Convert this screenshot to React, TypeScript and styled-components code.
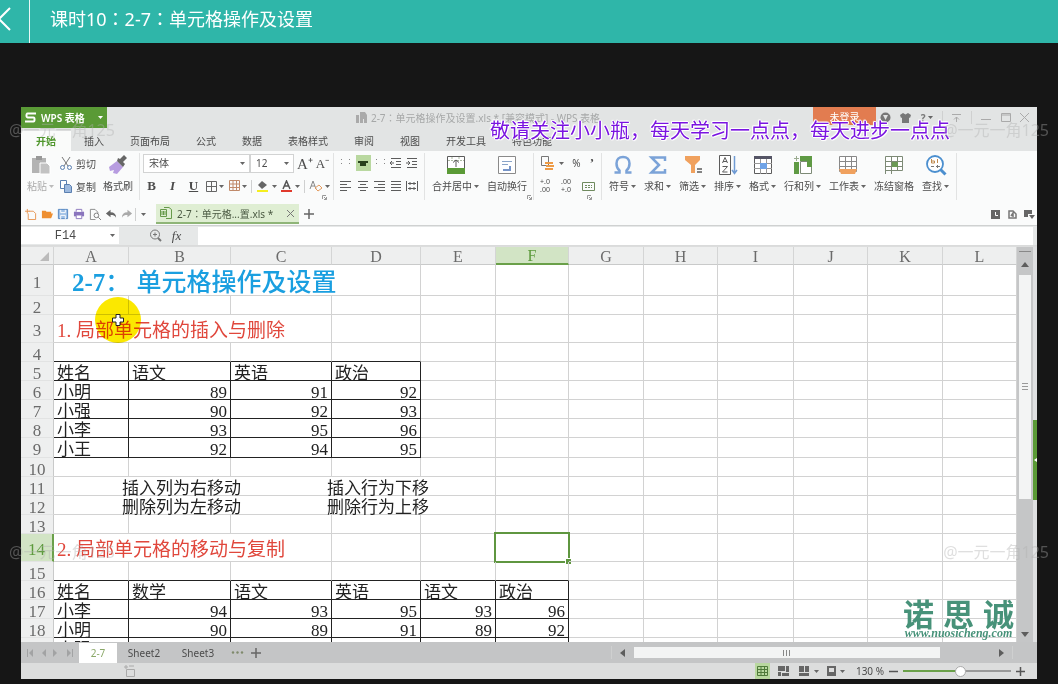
import React from 'react';
import styled, { createGlobalStyle } from 'styled-components';

const SANS = "'Noto Sans', 'Noto Sans CJK SC', sans-serif";
const SONG = "'Liberation Serif', 'Noto Sans CJK SC', serif";

const GlobalStyle = createGlobalStyle`
  * { box-sizing: border-box; }
  body { margin: 0; background: #161616; font-family: ${SANS}; }
  button, input, select { font-family: inherit; color: inherit; margin: 0; padding: 0; border: 0; background: none; border-radius: 0; }
  button { cursor: pointer; }
  svg { display: block; flex: none; }
`;

const Page = styled.div`
  position: relative;
  display: flex;
  flex-direction: column;
  height: 100vh;
  min-height: 480px;
  overflow: hidden;
`;
const CourseBar = styled.header`
  display: flex;
  align-items: stretch;
  flex: none;
  height: 43px;
  background: #2fb6a9;
  color: #fff;
`;
const Back = styled.button`
  width: 30px;
  padding-bottom: 6px;
  border-right: 1px solid #e8f8f6;
`;
const CourseTitle = styled.h1`
  margin: 0;
  padding-left: 20px;
  font-size: 18px;
  font-weight: 400;
  line-height: 36px;
`;
const Colon = styled.span`
  font-family: 'Noto Sans CJK TC', sans-serif;
`;
const Stage = styled.main`
  display: flex;
  flex: 1;
  min-height: 0;
  padding: 64px 21px 5px;
`;
const AppWindow = styled.section`
  position: relative;
  display: flex;
  flex-direction: column;
  flex: 1;
  min-width: 0;
  overflow: hidden;
  background: #fff;
  color: #4c4c4c;
  font-size: 10px;
`;

const TitleBar = styled.div`
  display: flex;
  flex: none;
  height: 24px;
  align-items: flex-start;
  background: #e2e4e4;
`;
const Brand = styled.button`
  display: flex;
  align-items: center;
  gap: 5px;
  width: 86px;
  height: 21px;
  padding: 0 4px;
  background: #5a9a36;
  color: #fff;
  font-size: 10px;
  font-weight: 600;
  white-space: nowrap;
`;
const FileName = styled.div`
  display: flex;
  flex: 1;
  align-items: center;
  justify-content: center;
  gap: 4px;
  height: 21px;
  padding-left: 36px;
  color: #a6a8a8;
  white-space: nowrap;
`;
const SignIn = styled.button`
  width: 63px;
  height: 18px;
  background: #e27c50;
  color: #fff;
  font-size: 10px;
`;
const WindowTools = styled.div`
  display: flex;
  align-items: center;
  justify-content: space-between;
  width: 161px;
  height: 21px;
  padding: 0 8px 0 4px;
  color: #777;
`;
const IconButton = styled.button<{ $on?: boolean }>`
  display: flex;
  align-items: center;
  justify-content: center;
  gap: 2px;
  height: 16px;
  min-width: 15px;
  background: ${(p) => (p.$on ? '#b9d8a0' : 'transparent')};
  font-size: 10px;
`;
const Tabs = styled.nav`
  display: flex;
  flex: none;
  height: 20px;
  padding-right: 10px;
  background: #e2e4e4;
`;
const Tab = styled.button<{ $active?: boolean }>`
  padding: 0 ${(p) => (p.$active ? 15 : 13)}px;
  background: ${(p) => (p.$active ? '#fafbfa' : 'transparent')};
  color: ${(p) => (p.$active ? '#4f962c' : '#4c4c4c')};
  font-weight: ${(p) => (p.$active ? 700 : 400)};
  font-size: 10px;
  line-height: 20px;
  white-space: nowrap;
`;

const Ribbon = styled.div`
  display: flex;
  flex: none;
  height: 53px;
  padding-top: 2px;
  background: #fafbfb;
`;
const Group = styled.div<{ $w?: number; $gap?: number; $pad?: number }>`
  display: flex;
  flex: none;
  gap: ${(p) => p.$gap ?? 0}px;
  width: ${(p) => (p.$w ? `${p.$w}px` : 'auto')};
  height: 47px;
  padding: 0 ${(p) => p.$pad ?? 6}px;
  border-right: 1px solid #e2e3e3;
`;
const Stack = styled.div`
  display: flex;
  flex-direction: column;
  flex: 1;
  gap: 3px;
`;
const Line = styled.div<{ $gap?: number; $between?: boolean }>`
  display: flex;
  align-items: center;
  justify-content: ${(p) => (p.$between ? 'space-between' : 'flex-start')};
  gap: ${(p) => p.$gap ?? 0}px;
  height: 20px;
`;
const BigButton = styled.button<{ $muted?: boolean }>`
  display: flex;
  flex-direction: column;
  align-items: center;
  gap: 2px;
  height: 44px;
  padding-top: 1px;
  color: ${(p) => (p.$muted ? '#aaa' : '#4c4c4c')};
  font-size: 10px;
  line-height: 16px;
  white-space: nowrap;
`;
const Label = styled.span`
  display: flex;
  align-items: center;
  gap: 2px;
`;
const SmallButton = styled.button`
  display: flex;
  align-items: center;
  gap: 4px;
  height: 20px;
  font-size: 10px;
  white-space: nowrap;
`;
const SelectBox = styled.label<{ $w: number }>`
  display: flex;
  align-items: center;
  width: ${(p) => p.$w}px;
  height: 19px;
  padding-right: 4px;
  border: 1px solid #d2d3d3;
  background: #fff;
`;
const Select = styled.select`
  flex: 1;
  min-width: 0;
  height: 17px;
  padding-left: 5px;
  appearance: none;
  font-size: 10px;
  outline: 0;
`;
const Format = styled.button<{ $bold?: boolean; $italic?: boolean; $line?: boolean; $w?: number; $size?: number }>`
  width: ${(p) => p.$w ?? 17}px;
  font-family: 'Liberation Serif', serif;
  font-size: ${(p) => p.$size ?? 13}px;
  font-weight: ${(p) => (p.$bold ? 700 : 400)};
  font-style: ${(p) => (p.$italic ? 'italic' : 'normal')};
  text-decoration: ${(p) => (p.$line ? 'underline' : 'none')};
`;
const Tiny = styled.button`
  font-size: 7px;
  line-height: 8px;
  text-align: right;
`;

const QuickBar = styled.div`
  display: flex;
  flex: none;
  align-items: center;
  height: 22px;
  padding: 0 0 1px 2px;
  border-bottom: 1px solid #cfd1d1;
  background: #fafbfb;
`;
const QuickTools = styled.div`
  display: flex;
  align-items: center;
  width: 129px;
`;
const Divider = styled.i`
  width: 1px;
  height: 13px;
  background: #cfd0d0;
`;
const DocTab = styled.div`
  display: flex;
  align-items: center;
  gap: 5px;
  width: 143px;
  height: 20px;
  margin-left: 4px;
  padding: 0 5px 0 4px;
  border-bottom: 2px solid #8fb578;
  background: #dfeed3;
  color: #4b5a43;
  white-space: nowrap;
`;
const Spacer = styled.span`
  flex: 1;
`;
const FormulaBar = styled.div`
  display: flex;
  flex: none;
  align-items: center;
  height: 20px;
  padding: 1px 4px 1px 0;
  border-bottom: 1px solid #dadbdb;
  background: #e6e8e8;
`;
const NameBox = styled.div`
  display: flex;
  align-items: center;
  width: 98px;
  height: 17px;
  padding-right: 4px;
  background: #fff;
`;
const NameInput = styled.input`
  flex: 1;
  min-width: 0;
  height: 17px;
  text-align: center;
  font-family: 'Liberation Mono', monospace;
  font-size: 12px;
`;
const FormulaTools = styled.div`
  display: flex;
  align-items: center;
  gap: 6px;
  width: 79px;
  padding-left: 30px;
`;
const FormulaInput = styled.input`
  flex: 1;
  min-width: 0;
  height: 18px;
  background: #fff;
  font-size: 12px;
`;

const Workspace = styled.div`
  display: flex;
  flex: 1;
  min-height: 0;
  padding-top: 1px;
  background: #dcdddd;
`;
const SheetArea = styled.div`
  position: relative;
  flex: 1;
  min-width: 0;
  overflow: hidden;
  background: #fff;
`;
const Sheet = styled.table`
  width: 100%;
  table-layout: fixed;
  border-collapse: separate;
  border-spacing: 0;
  font-family: ${SONG};
  font-size: 17px;
  color: #222;
`;
const ColHead = styled.th<{ $on?: boolean }>`
  height: 18px;
  padding: 2px 0 0;
  border-right: 1px solid #d4d5d5;
  border-bottom: ${(p) => (p.$on ? '2px solid #6aa049' : '1px solid #c9caca')};
  background: ${(p) => (p.$on ? '#d2e4c5' : '#eeefef')};
  color: ${(p) => (p.$on ? '#5c9a3c' : '#6b6b6b')};
  font-size: 16px;
  font-weight: 400;
  line-height: 14px;
`;
const RowHead = styled.th<{ $on?: boolean }>`
  padding: 0;
  border-right: ${(p) => (p.$on ? '2px solid #6aa049' : '1px solid #c9caca')};
  border-bottom: 1px solid #e2e3e3;
  background: ${(p) => (p.$on ? '#d2e4c5' : '#eeefef')};
  color: ${(p) => (p.$on ? '#5c9a3c' : '#6b6b6b')};
  font-weight: 400;
  text-align: center;
`;
const Cell = styled.td<{ $rule?: boolean; $below?: boolean; $num?: boolean }>`
  position: relative;
  padding: 0 3px;
  border-right: 1px solid ${(p) => (p.$rule ? '#222' : '#d2d2d2')};
  border-bottom: 1px solid ${(p) => (p.$rule || p.$below ? '#222' : '#d2d2d2')};
  text-align: ${(p) => (p.$num ? 'right' : 'left')};
`;
const Content = styled.div<{ $h: number }>`
  height: ${(p) => p.$h - 1}px;
  line-height: ${(p) => p.$h + 4}px;
  white-space: pre;
`;
const SheetTitle = styled.strong`
  padding-left: 15px;
  color: #1a9fe0;
  font-size: 25px;
  font-weight: 500;
`;
const TitleNumber = styled.span`
  font-weight: 700;
`;
const Section = styled.span`
  color: #e0473c;
  font-size: 19px;
`;
const Notes = styled.span`
  display: flex;
  gap: 86px;
  padding-left: 65px;
`;
const Selection = styled.div`
  position: absolute;
  inset: -2px;
  border: 2px solid #5f9640;
  &::after {
    content: '';
    position: absolute;
    right: -3px;
    bottom: -3px;
    width: 5px;
    height: 5px;
    border: 1px solid #fff;
    border-width: 1px 0 0 1px;
    background: #5f9640;
  }
`;
const Logo = styled.div`
  position: absolute;
  right: 3px;
  bottom: 3px;
  display: flex;
  flex-direction: column;
  align-items: center;
  color: #479279;
`;
const LogoName = styled.div`
  display: flex;
  gap: 9px;
  font-size: 31px;
  font-weight: 700;
  line-height: 26px;
`;
const LogoUrl = styled.a`
  color: inherit;
  font: italic 700 12px/12px 'Liberation Serif', serif;
  text-decoration: none;
`;
const VScroll = styled.div`
  display: flex;
  flex-direction: column;
  align-items: center;
  width: 16px;
  padding: 4px 0;
  background: #c5c6c7;
  color: #5d5d5d;
`;
const SplitMark = styled.i`
  width: 12px;
  height: 1px;
  margin-bottom: 9px;
  background: #888;
`;
const VThumb = styled.div`
  display: flex;
  flex: 225;
  align-items: center;
  justify-content: center;
  width: 12px;
  margin-top: 6px;
  background: #f3f4f4;
`;
const VRest = styled.div`
  flex: 132;
`;
const Edge = styled.div`
  display: flex;
  flex-direction: column;
  width: 4px;
  background: #dfe0e1;
`;
const PaneHandle = styled.button`
  display: flex;
  align-items: center;
  justify-content: flex-end;
  width: 4px;
  height: 80px;
  margin-top: 173px;
  background: #5a9a36;
  color: #fff;
`;

const SheetBar = styled.div`
  display: flex;
  flex: none;
  align-items: center;
  height: 21px;
  padding: 0 24px 0 6px;
  background: #c4c5c6;
  font-size: 11px;
`;
const SheetNav = styled.div`
  display: flex;
  align-items: center;
  justify-content: space-between;
  width: 52px;
  padding-right: 6px;
  color: #a2a3a4;
`;
const SheetTab = styled.button<{ $active?: boolean }>`
  width: ${(p) => (p.$active ? 38 : 54)}px;
  height: 20px;
  background: ${(p) => (p.$active ? '#fff' : 'transparent')};
  color: ${(p) => (p.$active ? '#8aa868' : '#4c4c4c')};
  font-size: 10px;
`;
const HScroll = styled.div`
  display: flex;
  flex: 0 0 402px;
  align-items: center;
  gap: 7px;
  color: #5d5d5d;
`;
const HThumb = styled.div`
  display: flex;
  flex: none;
  align-items: center;
  justify-content: center;
  width: 306px;
  height: 11px;
  background: #f3f4f4;
`;
const Status = styled.footer`
  display: flex;
  flex: none;
  align-items: center;
  height: 16px;
  padding: 0 12px 0 103px;
  background: #dcdddd;
`;
const ViewButtons = styled.div`
  display: flex;
  gap: 6px;
  margin-right: 11px;
`;
const Zoom = styled.label`
  display: flex;
  align-items: center;
  gap: 5px;
  font-size: 10px;
  white-space: nowrap;
`;
const Range = styled.input`
  width: 108px;
  height: 14px;
  appearance: none;
  background: linear-gradient(to right, #6aa049 54%, #999 54%) center / 100% 2px no-repeat;
  &::-webkit-slider-thumb {
    appearance: none;
    width: 11px;
    height: 11px;
    border: 1px solid #aaa;
    border-radius: 50%;
    background: #fff;
  }
`;

const Banner = styled.p`
  position: absolute;
  top: 13px;
  right: 87px;
  margin: 0;
  color: #7a14e0;
  font-size: 20px;
  line-height: 22px;
  text-shadow: -1px 0 #fff, 1px 0 #fff, 0 -1px #fff, 0 1px #fff, 1px 1px 1px #fff, -1px -1px 1px #fff;
  white-space: nowrap;
`;
const Watermark = styled.span<{ $top: number; $end?: boolean }>`
  position: absolute;
  top: ${(p) => p.$top}px;
  ${(p) => (p.$end ? 'right: 9px;' : 'left: 9px;')}
  color: rgba(175, 175, 175, 0.4);
  font-size: 16px;
  line-height: 20px;
  pointer-events: none;
`;
const Pointer = styled.div`
  position: absolute;
  top: 190px;
  left: 74px;
  display: flex;
  align-items: center;
  justify-content: center;
  width: 46px;
  height: 46px;
`;
const Halo = styled.i`
  position: absolute;
  inset: 0;
  border-radius: 50%;
  background: #fbe800;
  mix-blend-mode: multiply;
`;
const PointerIcon = styled.svg`
  position: relative;
`;

const Caret = ({ color = '#666' }: { color?: string }) => (
  <svg width="5" height="3" viewBox="0 0 5 3"><path d="M0 0h5L2.5 3z" fill={color} /></svg>
);
const Triangle = ({ d }: { d: string }) => (
  <svg width="8" height="8" viewBox="0 0 8 8"><path d={d} fill="currentColor" /></svg>
);
const Plus = () => (
  <svg width="10" height="10" viewBox="0 0 10 10"><path d="M5 0v10M0 5h10" stroke="#666" strokeWidth="1.5" /></svg>
);
const Art = ({ w = 22, children }: { w?: number; children: React.ReactNode }) => (
  <svg width={w} height={w} viewBox="0 0 22 22" fill="none" stroke="#5c5c5c">{children}</svg>
);
const Launcher = () => (
  <svg width="5" height="5" viewBox="0 0 5 5" fill="none" stroke="#999"><path d="M.5 4V.5H4M2 2l2.500 2.500M4.500 2v2.500H2" /></svg>
);
const Corner = styled.span`
  align-self: flex-end;
  margin: 0 3px 0 -8px;
`;

const art = {
  paste: <Art><path d="M2 4h14v15H2z" fill="#b3b3b3" stroke="none" /><path d="M6 2h6v4H6z" fill="#999" stroke="none" /><path d="M10 9h7l3 3v8H10z" fill="#c2c2c2" stroke="#fff" /></Art>,
  brush: <Art><path d="M2 13l8-6 6 6-6 7-4-1 1-3-4 1z" fill="#b79ce0" stroke="none" /><path d="M10 7l6 6 2-3-2-2 4-4-3-3-4 4-2-1z" fill="#666" stroke="none" /></Art>,
  merge: <Art><path d="M2.500 2.500h17v17h-17z" fill="#fff" /><path d="M2 14h18v6H2z" fill="#5a9a36" stroke="none" /><path d="M3 6.500h16M7 3v3M14 3v3" stroke="#a9b8a0" strokeDasharray="2 1" /><path d="M11 6v7M8 8.500L11 6l3 2.500" /></Art>,
  wrap: <Art><path d="M2.500 2.500h17v17h-17z" fill="#fff" stroke="#8a8a8a" /><path d="M6 7.500h10M6 10.500h6" stroke="#8aa4c8" /><path d="M7 16h7v-4" stroke="#7795c8" strokeWidth="2" /></Art>,
  omega: <Art><path d="M2.500 18.500h5v-2C5 14.500 4.500 12 4.500 9.500 4.500 5.500 7 3 11 3s6.500 2.500 6.500 6.500c0 2.500-.5 5-3 7v2h5" stroke="#7ba3d8" strokeWidth="2.500" /></Art>,
  sigma: <Art><path d="M18 7V3.500H4.500L12 11l-7.500 7.500H18V15" stroke="#7ba3d8" strokeWidth="2.500" /></Art>,
  filter: <Art><path d="M3 2h15v4l-5 5v8H9v-8L3 6z" fill="#f0a15e" stroke="none" /><path d="M15 15h5M15 18h5" strokeWidth="1.500" /></Art>,
  sort: <Art><path d="M2.500 1.500h11v19h-11z" fill="#fff" /><path d="M5.500 9L8 3.500 10.500 9M6 7.500h4M5.500 12.500h5L5.500 18h5" /><path d="M17.500 2v17M15 16l2.500 3.500L20 16" stroke="#6f9bd4" strokeWidth="1.500" /></Art>,
  format: <Art><path d="M2.500 2.500h17v17h-17z" fill="#fff" /><path d="M2 2h18v3H2z" fill="#556" stroke="none" /><path d="M8.500 5v15M14.500 5v15M2 9.500h18M2 14.500h18" stroke="#999" /><path d="M8 9h7v6H8z" fill="#6fa3e6" stroke="none" /></Art>,
  rows: <Art><path d="M2 8h5v12H2zM8 2h12v5H8z" fill="#5f9a44" stroke="none" /><path d="M8.500 7.500h11v12h-11z" fill="#fff" stroke="#7d8a76" /><path d="M2 4.500h5M4.500 2v5" stroke="#9aab90" /><path d="M15 7h5v6h-5z" fill="#5f9a44" stroke="none" /></Art>,
  sheet: <Art><path d="M2.500 2.500h17v15h-17zM8.500 3v14M14.500 3v14M3 7.500h16M3 12.500h16" fill="#fff" stroke="#888" /><path d="M2 15h18l-2 5H4z" fill="#f0a15e" stroke="none" /></Art>,
  freeze: <Art><path d="M2.500 2.500h17v14h-17zM8.500 3v17M14.500 3v13M3 7.500h16M3 12.500h16M2.500 16v4" fill="#fff" stroke="#7d8a76" /><path d="M9 8h6v5H9z" fill="#6c9a55" stroke="none" /></Art>,
  find: <Art><circle cx="10" cy="10" r="8" fill="#fff" stroke="#4b8fcf" strokeWidth="1.800" /><path d="M15.500 15.500l5 5" stroke="#4b8fcf" strokeWidth="3" /><path d="M6.500 5v4h3V7h-3M12.500 5v4" stroke="#c08a4e" /><path d="M6 12.500h3M11 12.500h4M12.500 11v3" stroke="#777" /></Art>,
};

const bigButtons: { label: string; icon: React.ReactNode; plain?: boolean }[] = [
  { label: '符号', icon: art.omega },
  { label: '求和', icon: art.sigma },
  { label: '筛选', icon: art.filter },
  { label: '排序', icon: art.sort },
  { label: '格式', icon: art.format },
  { label: '行和列', icon: art.rows },
  { label: '工作表', icon: art.sheet },
  { label: '冻结窗格', icon: art.freeze, plain: true },
  { label: '查找', icon: art.find },
];

const Align = ({ kind }: { kind: 'left' | 'center' | 'right' | 'full' | 'spread' | 'out' | 'in' }) => {
  const paths = {
    left: 'M0 1.500h11M0 4.500h7M0 7.500h11M0 10.500h7',
    center: 'M1 1.500h10M3 4.500h6M1 7.500h10M3 10.500h6',
    right: 'M1 1.500h11M5 4.500h7M1 7.500h11M5 10.500h7',
    full: 'M1 1.500h10M1 4.500h10M1 7.500h10M1 10.500h10',
    spread: 'M.5 1v10M11.500 1v10M2 3.500h8M2 8.500h8M4 2v3M8 2v3M4 7v3M8 7v3',
    out: 'M1 1.500h10M6 4.500h5M6 7.500h5M1 10.500h10M4 6H0M2 4L0 6l2 2',
    in: 'M1 1.500h10M6 4.500h5M6 7.500h5M1 10.500h10M0 6h4M2 4l2 2-2 2',
  };
  return <svg width="12" height="12" viewBox="0 0 12 12" fill="none" stroke="#5c5c5c"><path d={paths[kind]} /></svg>;
};
const Dots = () => (
  <svg width="12" height="12" viewBox="0 0 12 12" fill="#888"><path d="M1 2h1v1H1zM1 6h1v1H1zM9 2h1v1H9zM9 6h1v1H9z" /></svg>
);
const Middle = () => (
  <svg width="12" height="12" viewBox="0 0 12 12"><path d="M1 4h10v2H1zM3 6h6v3H3z" fill="#27401c" /></svg>
);

const quickIcons = [
  { name: '新建', icon: <path d="M4 3.500h5l2.500 2.500v6.500h-8V6M0 3.500h5M2.500 1v5" stroke="#e6934e" /> },
  { name: '打开', icon: <path d="M1 11V3h4l1 1h5v2h2l-2 5z" fill="#ee8f31" stroke="none" /> },
  { name: '保存', icon: <><path d="M1.500 1.500h10v10h-10z" fill="#9fc0e6" stroke="#5384c0" /><path d="M4 2v3h5V2M4 12V8h5v4" stroke="#fff" /></> },
  { name: '打印', icon: <><path d="M1 4h11v5H1z" fill="#8a75bd" stroke="none" /><path d="M3.500 4V1.500h6V4M3.500 8v3.500h6V8" stroke="#8a75bd" fill="#fff" /></> },
  { name: '预览', icon: <><path d="M7 12.500H1.500v-11h5l3 3V6" stroke="#888" /><circle cx="8" cy="8" r="2.500" stroke="#777" /><path d="M10 10l3 3" stroke="#777" /></> },
  { name: '撤销', icon: <path d="M1 6l5-4v2.500c4 0 6 2 6 6-1.500-2.500-3-3-6-3V10z" fill="#666" stroke="none" /> },
  { name: '恢复', icon: <path d="M12 6L7 2v2.500c-4 0-6 2-6 6 1.500-2.500 3-3 6-3V10z" fill="#aaa" stroke="none" /> },
];

const columns = [33, 75, 102, 101, 89, 75, 73, 75, 74, 76, 74, 75];
const letters = 'ABCDEFGHIJKL'.split('');

type Row = { h?: number; merged?: { span: number; node: React.ReactNode }; data?: (string | number)[]; below?: number };
const rows: Row[] = [
  { h: 31, merged: { span: 4, node: <SheetTitle><TitleNumber>2-7</TitleNumber>： 单元格操作及设置</SheetTitle> } },
  {},
  { h: 28, merged: { span: 3, node: <Section>1. 局部单元格的插入与删除</Section> } },
  { below: 4 },
  { data: ['姓名', '语文', '英语', '政治'] },
  { data: ['小明', 89, 91, 92] },
  { data: ['小强', 90, 92, 93] },
  { data: ['小李', 93, 95, 96] },
  { h: 20, data: ['小王', 92, 94, 95] },
  {},
  { merged: { span: 5, node: <Notes><span>插入列为右移动</span><span>插入行为下移</span></Notes> } },
  { merged: { span: 5, node: <Notes><span>删除列为左移动</span><span>删除行为上移</span></Notes> } },
  {},
  { h: 28, merged: { span: 3, node: <Section>2. 局部单元格的移动与复制</Section> } },
  { below: 6 },
  { data: ['姓名', '数学', '语文', '英语', '语文', '政治'] },
  { data: ['小李', 94, 93, 95, 93, 96] },
  { data: ['小明', 90, 89, 91, 89, 92] },
  { data: ['小强', '', '', '', '', ''] },
];

function SheetRow({ row, index }: { row: Row; index: number }) {
  const h = row.h ?? 19;
  const start = row.merged ? row.merged.span : 0;
  const current = index === 13;
  return (
    <tr>
      <RowHead scope="row" $on={current}><Content $h={h}>{index + 1}</Content></RowHead>
      {row.merged && <Cell colSpan={start}><Content $h={h}>{row.merged.node}</Content></Cell>}
      {letters.slice(start).map((letter, i) => {
        const col = start + i;
        const value = row.data?.[col];
        return (
          <Cell
            key={letter}
            $rule={value !== undefined}
            $below={row.below !== undefined && col < row.below}
            $num={typeof value === 'number'}
          >
            <Content $h={h}>{value}</Content>
            {current && letter === 'F' && <Selection />}
          </Cell>
        );
      })}
    </tr>
  );
}

export default function App() {
  return (
    <Page>
      <GlobalStyle />
      <CourseBar>
        <Back aria-label="返回">
          <svg width="12" height="24" viewBox="0 0 12 24" fill="none" stroke="#fff" strokeWidth="2"><path d="M10 1L-1 12l11 11" /></svg>
        </Back>
        <CourseTitle>课时10<Colon>：</Colon>2-7<Colon>：</Colon>单元格操作及设置</CourseTitle>
      </CourseBar>
      <Stage>
        <AppWindow>
          <TitleBar>
            <Brand>
              <svg width="11" height="11" viewBox="0 0 11 11" fill="none" stroke="#fff" strokeWidth="1.800"><path d="M11 1.500H2.500C1 1.500 1 5.500 2.500 5.500h6c1.500 0 1.500 4 0 4H0" /></svg>
              WPS 表格
              <Spacer />
              <Caret color="#fff" />
            </Brand>
            <FileName>
              <svg width="11" height="11" viewBox="0 0 11 11" fill="#aaa"><path d="M0 3h3v8H0zM4 0h5l2 3v8H8V7H7v4H4z" /></svg>
              <span>2-7<Colon>：</Colon>单元格操作及设置.xls * [兼容模式] - WPS 表格</span>
            </FileName>
            <SignIn>未登录</SignIn>
            <WindowTools>
              <svg width="11" height="11" viewBox="0 0 11 11"><circle cx="5.500" cy="5.500" r="5" fill="#777" /><path d="M3 3h5L5.500 8z" fill="#e2e4e4" /></svg>
              <svg width="11" height="11" viewBox="0 0 11 11" fill="#777"><path d="M3 1l2.500 1.500L8 1l3 2-1 3-1-.5V11H2V5.500L1 6 0 3z" /></svg>
              <Label><b>?</b><Caret /></Label>
              <Divider />
              <svg width="9" height="9" viewBox="0 0 9 9" stroke="#aaa" fill="none"><path d="M0 1.500h9M4.500 9V4M2 6.500L4.500 4 7 6.500" /></svg>
              <Divider />
              <svg width="10" height="10" viewBox="0 0 10 10" stroke="#aaa"><path d="M0 6.500h10" /></svg>
              <svg width="10" height="9" viewBox="0 0 10 9" stroke="#aaa" fill="none"><path d="M.5.500h9v8h-9zM0 2h10" /></svg>
              <svg width="9" height="9" viewBox="0 0 9 9" stroke="#aaa"><path d="M0 0l9 9M9 0L0 9" /></svg>
            </WindowTools>
          </TitleBar>
          <Tabs>
            {['开始', '插入', '页面布局', '公式', '数据', '表格样式', '审阅', '视图', '开发工具', '特色功能'].map((t, i) => (
              <Tab key={t} $active={i === 0}>{t}</Tab>
            ))}
          </Tabs>

          <Ribbon>
            <Group $w={119} $gap={6}>
              <BigButton $muted>{art.paste}<Label>粘贴<Caret color="#bbb" /></Label></BigButton>
              <Stack>
                <SmallButton>
                  <svg width="12" height="13" viewBox="0 0 12 13" fill="none" stroke="#5a7fb0"><path d="M2 0l6 9M10 0L4 9" stroke="#777" /><circle cx="2.500" cy="10.500" r="2" /><circle cx="9.500" cy="10.500" r="2" /></svg>剪切
                </SmallButton>
                <SmallButton>
                  <svg width="12" height="13" viewBox="0 0 12 13" stroke="#5a7fb0"><path d="M.5.500h6v8h-6z" fill="#fff" /><path d="M4.500 4.500h5l2 2v6h-7z" fill="#9db9de" /></svg>复制
                </SmallButton>
              </Stack>
              <BigButton>{art.brush}<Label>格式刷</Label></BigButton>
            </Group>
            <Group $w={194} $pad={3}>
              <Stack>
                <Line $gap={3}>
                  <Line>
                    <SelectBox $w={107}><Select aria-label="字体"><option>宋体</option></Select><Caret /></SelectBox>
                    <SelectBox $w={44}><Select aria-label="字号"><option>12</option></Select><Caret /></SelectBox>
                  </Line>
                  <Format $w={15} $size={15}>A⁺</Format>
                  <Format $w={15}>A⁻</Format>
                </Line>
                <Line $between>
                  <Format $bold>B</Format>
                  <Format $italic $bold>I</Format>
                  <Format $line $bold>U</Format>
                  <IconButton aria-label="边框">
                    <svg width="11" height="11" viewBox="0 0 11 11" fill="none" stroke="#666"><path d="M.5.500h10v10H.5zM5.500 0v11M0 5.500h11" /></svg><Caret />
                  </IconButton>
                  <IconButton aria-label="绘制边框">
                    <svg width="12" height="12" viewBox="1 0 12 12" fill="none" stroke="#c08a6a"><path d="M2.500.500h10v10h-10zM6 0v11M9.500 0v11M2 4h11M2 7.500h11" /></svg><Caret />
                  </IconButton>
                  <Divider />
                  <IconButton aria-label="填充颜色">
                    <svg width="14" height="12" viewBox="3 0 14 12"><path d="M5 5l4-4 5 4-5 4z" fill="#666" /><path d="M4 10h11v2H4z" fill="#f5ee20" /></svg><Caret />
                  </IconButton>
                  <IconButton aria-label="字体颜色">
                    <svg width="12" height="12" viewBox="3 0 12 12" fill="none" stroke="#555" strokeWidth="1.500"><path d="M5 9l3.500-8L12 9M6 6h5" /><path d="M3 11h11" stroke="#e03a2c" strokeWidth="2" /></svg><Caret />
                  </IconButton>
                  <Divider />
                  <IconButton aria-label="清除格式">
                    <svg width="14" height="12" viewBox="2 0 14 12" fill="none" stroke="#888"><path d="M3 9l3-8 3 8M4 6h4" /><path d="M8 8l4-3 3 3-4 3z" stroke="#e39a5d" /></svg><Caret />
                  </IconButton>
                </Line>
              </Stack>
              <Corner><Launcher /></Corner>
            </Group>
            <Group $w={91}>
              <Stack>
                <Line $between>
                  <Dots /><IconButton $on aria-label="垂直居中"><Middle /></IconButton><Dots /><Align kind="out" /><Align kind="in" />
                </Line>
                <Line $between>
                  <Align kind="left" /><Align kind="center" /><Align kind="right" /><Align kind="full" /><Align kind="spread" />
                </Line>
              </Stack>
            </Group>
            <Group $w={109} $gap={8} $pad={7}>
              <BigButton>{art.merge}<Label>合并居中<Caret /></Label></BigButton>
              <BigButton>{art.wrap}<Label>自动换行</Label></BigButton>
              <Corner><Launcher /></Corner>
            </Group>
            <Group $w={68}>
              <Stack>
                <Line $gap={5}>
                  <svg width="14" height="14" viewBox="0 0 14 14" fill="none"><path d="M1.500.500h7v9h-7z" stroke="#777" /><path d="M5 6h8v2H5zM6 9h8v2H6zM5 12h8v2H5z" fill="#ee9b46" /></svg><Caret />
                  <IconButton>%</IconButton><Format $bold $w={6}>’</Format>
                </Line>
                <Line $between>
                  <Tiny>+.0<br />.00</Tiny><Tiny>.00<br />+.0</Tiny>
                  <svg width="13" height="9" viewBox="0 0 13 9" fill="none" stroke="#6f8a5e"><path d="M.5.500h12v8H.5z" /><path d="M3 3.500h7M3 5.500h7" strokeDasharray="2 1" /></svg>
                </Line>
              </Stack>
              <Corner><Launcher /></Corner>
            </Group>
            <Group $gap={8} $pad={7}>
              {bigButtons.map((b) => (
                <BigButton key={b.label}>{b.icon}<Label>{b.label}{!b.plain && <Caret />}</Label></BigButton>
              ))}
            </Group>
          </Ribbon>

          <QuickBar>
            <QuickTools>
              {quickIcons.map((q) => (
                <IconButton key={q.name} aria-label={q.name}>
                  <svg width="16" height="12" viewBox="-2 0 17 13" fill="none">{q.icon}</svg>
                </IconButton>
              ))}
              <Divider />
              <IconButton aria-label="更多"><Caret /></IconButton>
            </QuickTools>
            <DocTab>
              <svg width="12" height="12" viewBox="0 0 12 12" fill="none" stroke="#679a4b"><path d="M.5 2.500h6v7h-6zM2 4v4M5 4v4M3.500 4v4M4 .5h5l2.500 2v9H6" /></svg>
              <span>2-7<Colon>：</Colon>单元格...置.xls *</span>
              <Spacer />
              <svg width="7" height="7" viewBox="0 0 7 7" stroke="#777"><path d="M0 0l7 7M7 0L0 7" /></svg>
            </DocTab>
            <IconButton aria-label="新建标签">&nbsp;<Plus /></IconButton>
            <Spacer />
            <Label>
              <IconButton aria-label="历史"><svg width="9" height="9" viewBox="0 0 9 9"><path d="M0 0h9v9H0z" fill="#666" /><path d="M4.500 2v3.500H7" stroke="#fff" fill="none" /></svg></IconButton>
              <IconButton aria-label="文档"><svg width="9" height="9" viewBox="0 0 9 9" fill="none" stroke="#777" strokeWidth="1.500"><path d="M1 1h4l3 3v4H1zM3 6l2-3v4" /></svg></IconButton>
              <IconButton aria-label="列表"><svg width="11" height="9" viewBox="0 0 11 9" fill="#666"><path d="M0 0h8v4H4v3H0zM5 5h6L8 9z" /></svg></IconButton>
            </Label>
          </QuickBar>

          <FormulaBar>
            <NameBox><NameInput aria-label="名称框" defaultValue="F14" /><Caret /></NameBox>
            <FormulaTools>
              <svg width="13" height="13" viewBox="0 0 13 13" fill="none" stroke="#777"><circle cx="6" cy="5.500" r="4.500" /><path d="M9 9l3 3" strokeWidth="2" /><path d="M4 5.500h4M6 3.500v4" /></svg>
              <Format $italic>fx</Format>
            </FormulaTools>
            <FormulaInput aria-label="编辑栏" />
          </FormulaBar>

          <Workspace>
            <SheetArea>
              <Sheet>
                <colgroup>
                  {columns.map((w, i) => <col key={i} width={w} />)}
                  <col />
                </colgroup>
                <thead>
                  <tr>
                    <ColHead aria-label="全选">
                      <svg width="30" height="12" viewBox="0 0 30 12"><path d="M28 1v9H19z" fill="#bbb" /></svg>
                    </ColHead>
                    {letters.map((l) => <ColHead key={l} scope="col" $on={l === 'F'}>{l}</ColHead>)}
                  </tr>
                </thead>
                <tbody>
                  {rows.map((row, i) => <SheetRow key={i} row={row} index={i} />)}
                </tbody>
              </Sheet>
              <Logo>
                <LogoName><span>诺</span><span>思</span><span>诚</span></LogoName>
                <LogoUrl href="#">www.nuosicheng.com</LogoUrl>
              </Logo>
            </SheetArea>
            <VScroll>
              <SplitMark />
              <Triangle d="M0 6l4-5 4 5z" />
              <VThumb>
                <svg width="6" height="7" viewBox="0 0 6 7" stroke="#999"><path d="M0 .5h6M0 3.500h6M0 6.500h6" /></svg>
              </VThumb>
              <VRest />
              <Triangle d="M0 2l4 5 4-5z" />
            </VScroll>
            <Edge>
              <PaneHandle aria-label="展开窗格"><svg width="3" height="4" viewBox="0 0 3 4"><path d="M3 0v4L0 2z" fill="#fff" /></svg></PaneHandle>
            </Edge>
          </Workspace>

          <SheetBar>
            <SheetNav>
              <Triangle d="M0 0h1v8H0zM6 0v8L2 4z" />
              <Triangle d="M6 0v8L2 4z" />
              <Triangle d="M1 0v8l4-4z" />
              <Triangle d="M7 0h1v8H7zM2 0v8l4-4z" />
            </SheetNav>
            <SheetTab $active>2-7</SheetTab>
            <SheetTab>Sheet2</SheetTab>
            <SheetTab>Sheet3</SheetTab>
            <IconButton aria-label="更多工作表">
              <svg width="23" height="3" viewBox="0 0 23 3" fill="#7f8a6c"><circle cx="8" cy="1.500" r="1.200" /><circle cx="12.500" cy="1.500" r="1.200" /><circle cx="17" cy="1.500" r="1.200" /></svg>
            </IconButton>
            <IconButton aria-label="新建工作表"><Plus /></IconButton>
            <Spacer />
            <HScroll>
              <Divider />
              <Triangle d="M6 0v8L1 4z" />
              <HThumb><svg width="8" height="6" viewBox="0 0 8 6" stroke="#888"><path d="M.5 0v6M3.500 0v6M6.500 0v6" /></svg></HThumb>
              <Spacer />
              <Triangle d="M2 0v8l5-4z" />
              <Divider />
            </HScroll>
          </SheetBar>

          <Status>
            <svg width="12" height="12" viewBox="0 0 12 12" fill="none" stroke="#aaa"><path d="M2.500 4.500h8v7h-8zM0 2h4M2 0v4M5 1h5" /></svg>
            <Spacer />
            <ViewButtons>
              <IconButton $on aria-label="普通视图"><svg width="15" height="10" viewBox="0 0 15 10" fill="none" stroke="#4f7a3a"><path d="M2.500.500h10v9h-10zM6 0v10M9.500 0v10M2 3.500h11M2 6.500h11" /></svg></IconButton>
              <IconButton aria-label="分页预览"><svg width="15" height="10" viewBox="0 0 15 10" fill="#666"><path d="M2 0h7v5H2zM10 0h3v6h-3zM2 6h3v4H2zM6 7h7v3H6z" /></svg></IconButton>
              <IconButton aria-label="页面布局"><svg width="15" height="10" viewBox="0 0 15 10" fill="#666"><path d="M2 0h5v6H2zM8 0h4v6H8zM2 7h10v3H2z" /></svg><Caret /></IconButton>
              <IconButton aria-label="阅读视图"><svg width="13" height="10" viewBox="0 0 13 10"><path d="M2 0h9v10H2z" fill="#666" /><path d="M4 2h5v4H4z" fill="#ddd" /></svg><Caret /></IconButton>
            </ViewButtons>
            <Zoom>
              130 %
              <svg width="9" height="9" viewBox="0 0 9 9"><path d="M0 4.500h9" stroke="#555" strokeWidth="1.500" /></svg>
              <Range type="range" min={10} max={230} defaultValue={129} />
              <svg width="9" height="9" viewBox="0 0 9 9"><path d="M0 4.500h9M4.500 0v9" stroke="#555" strokeWidth="1.500" /></svg>
            </Zoom>
          </Status>

          <Banner>敬请关注小小瓶，每天学习一点点，每天进步一点点</Banner>
          <Pointer>
            <Halo />
            <PointerIcon width="12" height="12" viewBox="0 0 12 12" fill="#fff" stroke="#222"><path d="M4 .500h4v3.500h3.500v4H8v3.500H4V8H.5V4H4z" /></PointerIcon>
          </Pointer>
        </AppWindow>
      </Stage>
      <Watermark $top={120}>@一元一角125</Watermark>
      <Watermark $top={120} $end>@一元一角125</Watermark>
      <Watermark $top={542}>@一元一角125</Watermark>
      <Watermark $top={542} $end>@一元一角125</Watermark>
    </Page>
  );
}
